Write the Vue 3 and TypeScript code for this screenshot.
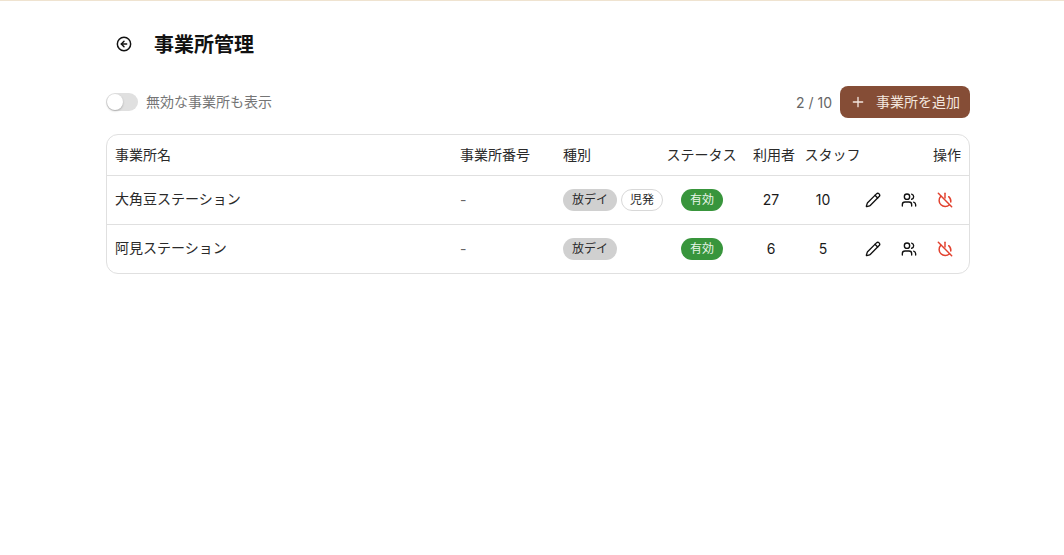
<template>
  <div class="page">
    <div class="inner">
      <header class="title-row">
        <button class="back-btn" type="button" aria-label="戻る">
          <svg viewBox="0 0 24 24" width="16" height="16" fill="none" stroke="currentColor" stroke-width="2.2" stroke-linecap="round" stroke-linejoin="round">
            <circle cx="12" cy="12" r="10" />
            <path d="M12 8l-4 4 4 4" />
            <path d="M16 12H8" />
          </svg>
        </button>
        <h1 class="title">事業所管理</h1>
      </header>

      <div class="toolbar">
        <label class="toggle-label">
          <span class="toggle"><span class="toggle-thumb"></span></span>
          <span class="cjk-lift">無効な事業所も表示</span>
        </label>
        <div class="toolbar-right">
          <span class="count">{{ offices.length }} / 10</span>
          <button class="add-btn" type="button">
            <svg viewBox="0 0 24 24" width="16" height="16" fill="none" stroke="currentColor" stroke-width="2" stroke-linecap="round">
              <path d="M12 5v14M5 12h14" />
            </svg>
            <span class="add-label">事業所を追加</span>
          </button>
        </div>
      </div>

      <div class="table-wrap">
        <table class="table">
          <colgroup>
            <col style="width: 345px" />
            <col style="width: 103px" />
            <col style="width: 104px" />
            <col style="width: 86px" />
            <col style="width: 52px" />
            <col style="width: 52px" />
            <col />
          </colgroup>
          <thead>
            <tr>
              <th>事業所名</th>
              <th>事業所番号</th>
              <th>種別</th>
              <th class="center nudge">ステータス</th>
              <th class="center">利用者</th>
              <th class="center nudge">スタッフ</th>
              <th class="right">操作</th>
            </tr>
          </thead>
          <tbody>
            <tr v-for="office in offices" :key="office.name">
              <td class="name">{{ office.name }}</td>
              <td class="muted">{{ office.number }}</td>
              <td>
                <div class="chips">
                  <span v-for="kind in office.kinds" :key="kind.label" class="chip" :class="{ 'chip--outline': kind.outline }">{{ kind.label }}</span>
                </div>
              </td>
              <td class="center"><span class="chip chip--active">有効</span></td>
              <td class="center">{{ office.users }}</td>
              <td class="center">{{ office.staff }}</td>
              <td>
                <div class="actions">
                  <svg viewBox="0 0 24 24" width="16" height="16" fill="none" stroke="currentColor" stroke-width="2" stroke-linecap="round" stroke-linejoin="round">
                    <path d="M21.17 6.81a2.82 2.82 0 0 0-3.99-3.99L3.84 16.17a2 2 0 0 0-.5.83l-1.32 4.35a.5.5 0 0 0 .62.62l4.35-1.32a2 2 0 0 0 .83-.5z" />
                    <path d="m15 5 4 4" />
                  </svg>
                  <svg viewBox="0 0 24 24" width="16" height="16" fill="none" stroke="currentColor" stroke-width="2" stroke-linecap="round" stroke-linejoin="round">
                    <path d="M16 21v-2a4 4 0 0 0-4-4H6a4 4 0 0 0-4 4v2" />
                    <circle cx="9" cy="7" r="4" />
                    <path d="M22 21v-2a4 4 0 0 0-3-3.87" />
                    <path d="M16 3.13a4 4 0 0 1 0 7.75" />
                  </svg>
                  <svg class="danger" viewBox="0 0 24 24" width="16" height="16" fill="none" stroke="currentColor" stroke-width="2.2" stroke-linecap="round" stroke-linejoin="round">
                    <path d="M17.5 7a9 9 0 0 1 3.2 8" />
                    <path d="M5.7 6.5a9 9 0 1 0 13 12.5" />
                    <path d="M12 2v7" />
                    <path d="m2 2 20 20" />
                  </svg>
                </div>
              </td>
            </tr>
          </tbody>
        </table>
      </div>
    </div>
  </div>
</template>

<script setup lang="ts">
interface Kind {
  label: string
  outline?: boolean
}

interface Office {
  name: string
  number: string
  kinds: Kind[]
  users: number
  staff: number
}

const offices: Office[] = [
  {
    name: '大角豆ステーション',
    number: '-',
    kinds: [{ label: '放デイ' }, { label: '児発', outline: true }],
    users: 27,
    staff: 10,
  },
  {
    name: '阿見ステーション',
    number: '-',
    kinds: [{ label: '放デイ' }],
    users: 6,
    staff: 5,
  },
]
</script>

<style>
html,
body {
  margin: 0;
  background: #fff;
}
</style>

<style scoped>
.page {
  min-height: 555px;
  box-sizing: border-box;
  border-top: 1px solid #efe3d0;
  font-family: Inter, "Noto Sans CJK JP", sans-serif;
  font-size: 14px;
  color: #1a1a1a;
}

.inner {
  width: 864px;
  margin-left: 106px;
}

.title-row {
  display: flex;
  align-items: center;
  gap: 12px;
  height: 40px;
  margin-top: 23px;
}

.back-btn {
  display: flex;
  align-items: center;
  justify-content: center;
  width: 36px;
  height: 36px;
  padding: 0;
  border: 0;
  background: none;
  color: #111;
}

.title {
  margin: 0;
  padding-bottom: 2px;
  font-size: 20px;
  font-weight: 600;
  color: #111;
}

.toolbar {
  display: flex;
  align-items: center;
  justify-content: space-between;
  height: 32px;
  margin-top: 22px;
}

.toggle-label {
  display: flex;
  align-items: center;
  gap: 8px;
  color: #757575;
}

.cjk-lift {
  padding-bottom: 3px;
}

.toggle {
  display: block;
  position: relative;
  width: 32px;
  height: 18px;
  border-radius: 9px;
  background: #e0e0e0;
}

.toggle-thumb {
  position: absolute;
  left: 1px;
  top: 1px;
  width: 16px;
  height: 16px;
  border-radius: 50%;
  background: #fff;
  box-shadow: 0 1px 2px rgba(0, 0, 0, 0.25);
}

.toolbar-right {
  display: flex;
  align-items: center;
  gap: 8px;
}

.count {
  color: #666;
}

.add-btn {
  display: flex;
  align-items: center;
  gap: 10px;
  height: 32px;
  width: 130px;
  box-sizing: border-box;
  padding: 0 10px;
  border: 0;
  border-radius: 8px;
  background: #854d36;
  color: #f3e6df;
  font: inherit;
}

.add-label {
  padding-bottom: 2px;
}

.table-wrap {
  margin-top: 16px;
  border: 1px solid #e0e0e0;
  border-radius: 12px;
  overflow: hidden;
}

.table {
  width: 100%;
  border-collapse: collapse;
  table-layout: fixed;
}

th,
td {
  padding: 0 8px;
  text-align: left;
  font-weight: 400;
  white-space: nowrap;
}

th {
  height: 40px;
  padding-bottom: 2px;
  box-sizing: border-box;
  color: #2a2a2a;
}

th.nudge {
  padding-left: 7.5px;
  padding-right: 8.5px;
}

td {
  height: 48px;
  border-top: 1px solid #e0e0e0;
}

td.name {
  height: 45px;
  padding-bottom: 3px;
  color: #2a2a2a;
}

.center {
  text-align: center;
}

.right {
  text-align: right;
}

.muted {
  color: #666;
}

.chips {
  display: flex;
  gap: 4px;
}

.chip {
  display: inline-flex;
  align-items: center;
  box-sizing: border-box;
  height: 22px;
  padding: 0 9px 2px;
  border-radius: 11px;
  background: #d0d0d0;
  font-size: 12px;
  color: #2a2a2a;
}

.chip--outline {
  background: #fff;
  border: 1px solid #d8d8d8;
  padding: 0 8px 2px;
}

.chip--active {
  background: #38953c;
  color: #e8f5e9;
}

.actions {
  display: flex;
  align-items: center;
  justify-content: flex-end;
  gap: 20px;
  padding-right: 8px;
  color: #111;
}

.danger {
  color: #e2412e;
}
</style>
